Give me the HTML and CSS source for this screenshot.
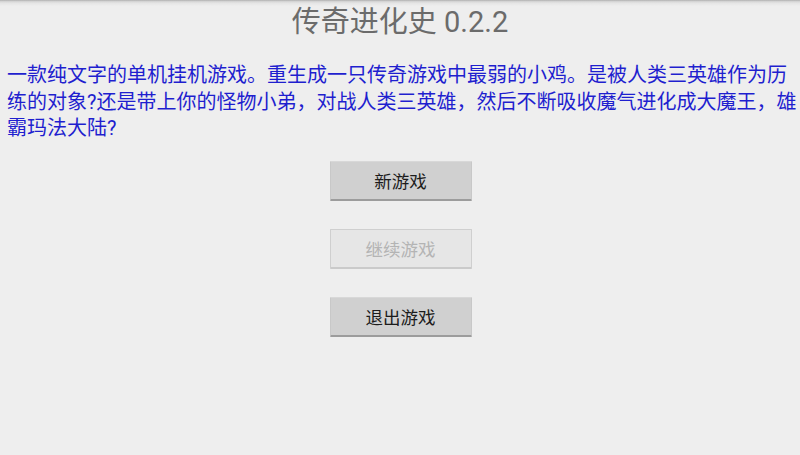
FILE: index.html
```html
<!DOCTYPE html>
<html lang="zh-CN">
<head>
<meta charset="utf-8">
<title>传奇进化史 0.2.2</title>
<link rel="stylesheet" href="styles.css">
</head>
<body>
<div class="screen">
  <div class="topshade"></div>
  <h1 class="title">传奇进化史 0.2.2</h1>
  <p class="desc">一款纯文字的单机挂机游戏。重生成一只传奇游戏中最弱的小鸡。是被人类三英雄作为历练的对象?还是带上你的怪物小弟，对战人类三英雄，然后不断吸收魔气进化成大魔王，雄霸玛法大陆?</p>
  <div class="menu">
    <button class="btn">新游戏</button>
    <button class="btn disabled" disabled>继续游戏</button>
    <button class="btn">退出游戏</button>
  </div>
</div>
</body>
</html>
```
FILE: styles.css
```css
html, body {
  margin: 0;
  padding: 0;
  background: #eeeeee;
}
.screen {
  width: 800px;
  height: 455px;
  position: relative;
  display: flex;
  flex-direction: column;
  font-family: Roboto, "Noto Sans CJK SC", sans-serif;
  overflow: hidden;
}
.topshade {
  position: absolute;
  left: 0;
  top: 0;
  right: 0;
  height: 6px;
  background: linear-gradient(to bottom, #a8a8a8 0px, #cfcfcf 1px, #e4e4e4 3px, #eeeeee 6px);
}
.title {
  margin: 0;
  height: 44px;
  line-height: 44px;
  text-align: center;
  font-size: 29px;
  font-weight: normal;
  color: #6b6b6b;
}
.desc {
  margin: 18px 3px 0 7px;
  font-size: 20px;
  line-height: 26.5px;
  color: #1f1fcf;
}
.menu {
  display: flex;
  flex-direction: column;
  align-items: center;
  gap: 28px;
  margin-top: 19px;
}
.btn {
  width: 142px;
  height: 40px;
  margin-left: 1px;
  padding: 0;
  font-family: Roboto, "Noto Sans CJK SC", sans-serif;
  font-size: 17.5px;
  color: #1c1c1c;
  background: #d0d0d0;
  border: 1px solid #c8c8c8;
  border-top-color: #d8d8d8;
  border-bottom: 2px solid #9c9c9c;
  border-radius: 1px;
}
.btn.disabled {
  background: #e6e6e6;
  color: #b4b4b4;
  border: 1px solid #cfcfcf;
  border-bottom: 2px solid #cacaca;
}
```
